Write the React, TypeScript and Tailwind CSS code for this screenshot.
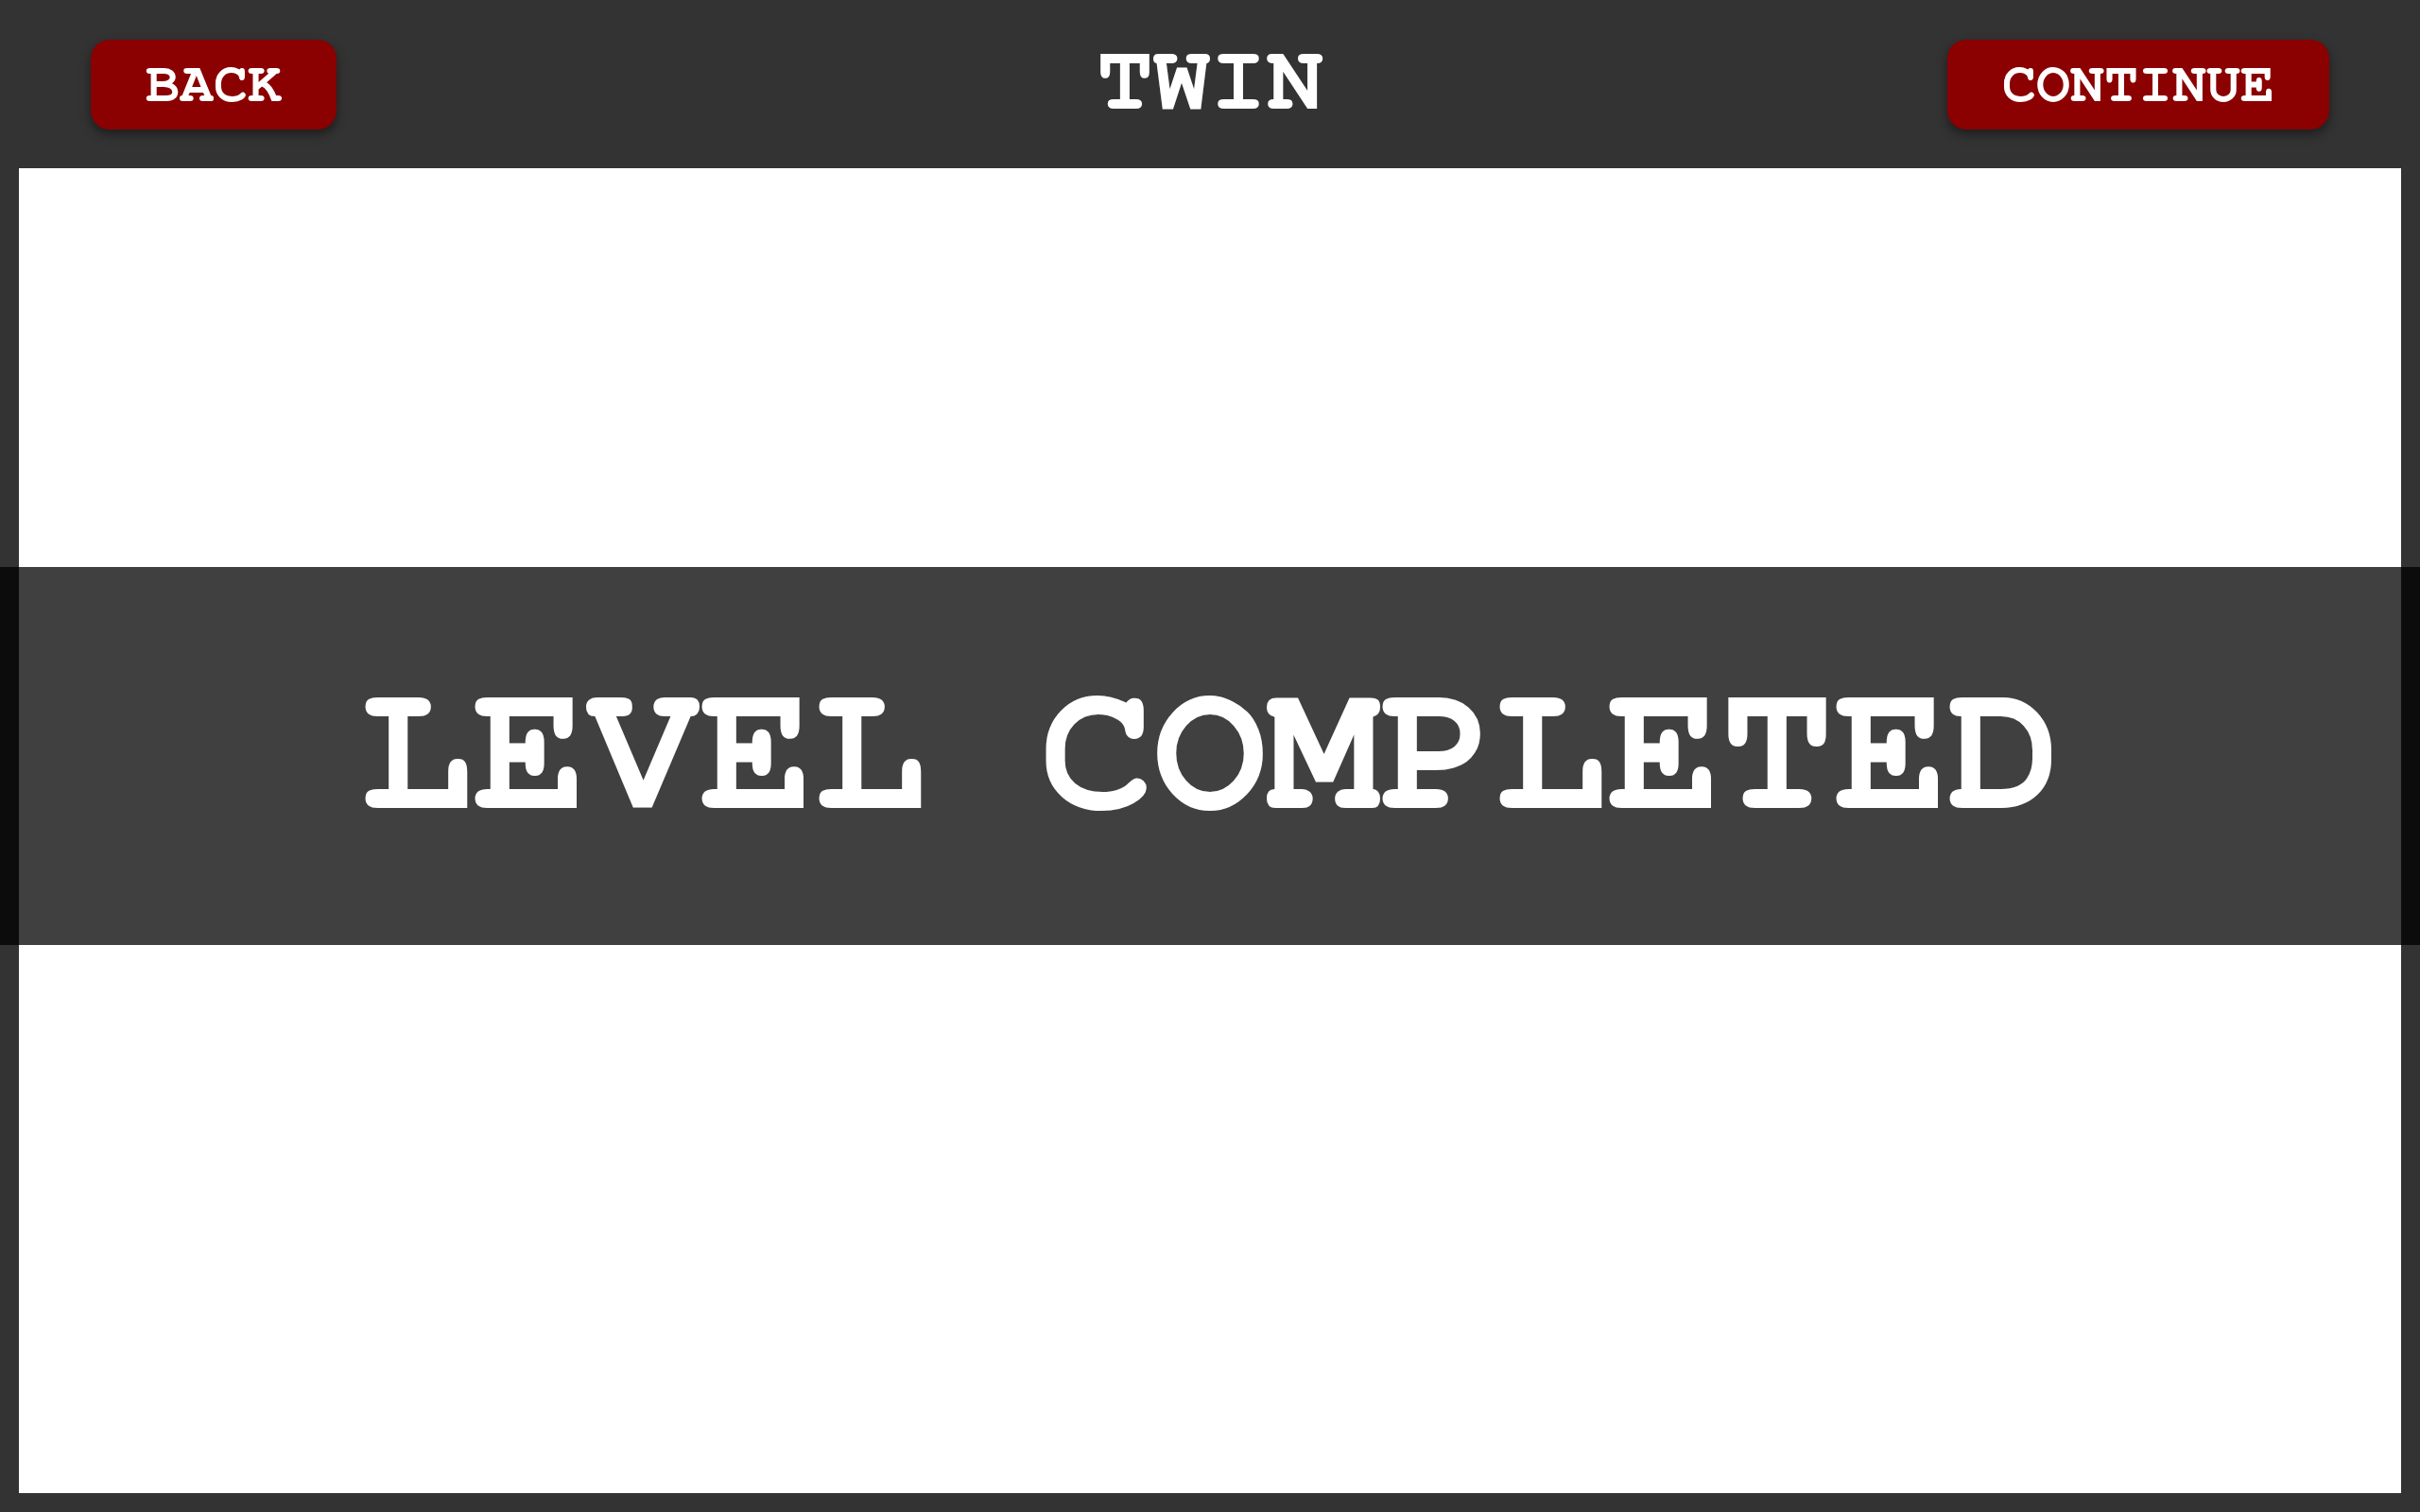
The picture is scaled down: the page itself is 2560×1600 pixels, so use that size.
import React from "react";

const mono = { fontFamily: 'FreeMono, "Courier New", "Liberation Mono", monospace' };

function Btn({ label }: { label: string }) {
  return (
    <button
      className="h-[95px] px-[58px] rounded-[20px] bg-[#8b0000] text-white font-bold text-[60px] leading-none flex items-center justify-center shadow-[0_5px_12px_rgba(0,0,0,0.45)]"
      style={mono}
    >
      {label}
    </button>
  );
}

export default function App() {
  return (
    <div className="relative h-screen w-full bg-[#333333] flex flex-col" style={mono}>
      <header className="h-[178px] px-[96px] flex items-center justify-between relative">
        <Btn label="BACK" />
        <div className="absolute left-1/2 top-[calc(50%-4px)] -translate-x-1/2 -translate-y-1/2 text-white font-bold text-[100px] leading-none" style={mono}>
          TWIN
        </div>
        <Btn label="CONTINUE" />
      </header>
      <div className="flex-1 px-[20px] pb-[20px] flex">
        <main className="flex-1 bg-white" />
      </div>
      <div className="absolute inset-0 flex items-center pointer-events-none">
        <div className="w-full h-[400px] bg-[rgba(0,0,0,0.75)] flex items-center justify-center pb-[10px]">
          <span className="text-white font-bold text-[200px] leading-none whitespace-pre" style={mono}>
            LEVEL COMPLETED
          </span>
        </div>
      </div>
    </div>
  );
}
